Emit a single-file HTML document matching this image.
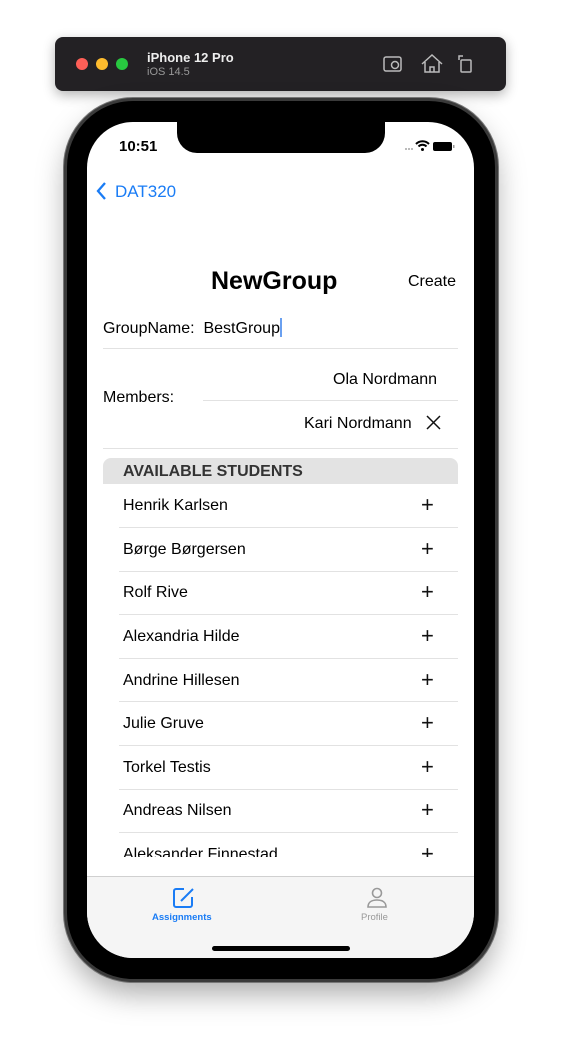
<!DOCTYPE html><html><head><style>
body{margin:0;width:561px;height:1055px;background:#fff;position:relative;overflow:hidden;font-family:"Liberation Sans",sans-serif}
.a{position:absolute}
.bar{left:55px;top:37px;width:451px;height:54px;background:#232124;border-radius:8px;box-shadow:0 4px 12px rgba(0,0,0,.3)}
.dot{width:12px;height:12px;border-radius:50%;top:58px}
.phone{left:67px;top:101px;width:428px;height:878px;border-radius:66px;background:#000;box-shadow:0 0 0 3px #3a3a3a,0 0 0 4px #777,0 14px 30px rgba(0,0,0,.35)}
.screen{left:87px;top:122px;width:387px;height:836px;border-radius:46px;background:#fff;overflow:hidden}
.t{font-size:16px;color:#000;white-space:nowrap}
.sep{height:1px;background:#e2e2e2}
.plus{font-size:22px;font-weight:300;color:#111}
</style></head><body>
<div class="a bar"></div>
<div class="a dot" style="left:76px;background:#fe5f57"></div>
<div class="a dot" style="left:96px;background:#febc2e"></div>
<div class="a dot" style="left:116px;background:#28c840"></div>
<div class="a" style="left:147px;top:50px;color:#eee;font-weight:bold;font-size:13px">iPhone 12 Pro</div>
<div class="a" style="left:147px;top:66px;color:#999;font-size:11px">iOS 14.5</div>
<svg class="a" style="left:380px;top:52px" width="100" height="24" fill="none" stroke="#bbb" stroke-width="1.5"><rect x="4" y="5" width="17" height="14" rx="2"/><circle cx="15" cy="13" r="3.5"/><path d="M42 12l10-9 10 9M45 10v10h14V10M50 20v-5h4v5"/><rect x="81" y="8" width="10" height="12" rx="1"/><path d="M83 4h-4v4"/></svg>
<div class="a phone"></div>
<div class="a screen">
<div class="a" style="left:90px;top:0;width:208px;height:31px;background:#000;border-radius:0 0 20px 20px"></div>
<div class="a" style="left:32px;top:16px;font-weight:bold;font-size:15px">10:51</div>
<svg class="a" style="left:318px;top:17px" width="60" height="14"><g fill="#bbb"><rect x="0" y="9" width="2" height="2"/><rect x="3" y="9" width="2" height="2"/><rect x="6" y="9" width="2" height="2"/></g><path d="M11 5a9 9 0 0 1 13 0M13.5 7.5a5.5 5.5 0 0 1 8 0" stroke="#000" stroke-width="2" fill="none"/><circle cx="17.5" cy="10.5" r="1.5"/><rect x="28" y="3" width="19" height="9" rx="2" fill="#000"/><rect x="48" y="6" width="1.5" height="3" fill="#999"/></svg>
<svg class="a" style="left:8px;top:59px" width="14" height="20" fill="none" stroke="#1a7cf5" stroke-width="2.3"><path d="M10 2L3 10l7 8"/></svg>
<div class="a t" style="left:28px;top:60px;color:#1a7cf5;font-size:17px">DAT320</div>
<div class="a t" style="left:124px;top:145px;font-size:25px;font-weight:bold">NewGroup</div>
<div class="a t" style="left:321px;top:151px">Create</div>
<div class="a t" style="left:16px;top:196px">GroupName:&nbsp; BestGroup<span style="display:inline-block;width:2px;height:19px;background:#6aa0f0;vertical-align:-4px"></span></div>
<div class="a sep" style="left:16px;top:226px;width:355px"></div>
<div class="a t" style="left:246px;top:249px">Ola Nordmann</div>
<div class="a t" style="left:16px;top:267px">Members:</div>
<div class="a sep" style="left:116px;top:278px;width:255px"></div>
<div class="a t" style="left:217px;top:293px">Kari Nordmann</div>
<svg class="a" style="left:339px;top:293px" width="15" height="15" stroke="#111" stroke-width="1.5"><path d="M1 1l13 13M14 1L1 14"/></svg>
<div class="a sep" style="left:16px;top:326px;width:355px"></div>
<div class="a" style="left:16px;top:336px;width:355px;height:26px;background:#e3e3e3;border-radius:8px 8px 0 0"></div>
<div class="a t" style="left:36px;top:341px;font-weight:bold;color:#333;font-size:16px">AVAILABLE STUDENTS</div>
<div class="a" style="left:0;top:362px;width:387px;height:373px;overflow:hidden">
<div class="a t" style="left:36px;top:13px">Henrik Karlsen</div><div class="a plus" style="left:334px;top:8px">+</div><div class="a sep" style="left:32px;top:43px;width:339px"></div>
<div class="a t" style="left:36px;top:57px">Børge Børgersen</div><div class="a plus" style="left:334px;top:52px">+</div><div class="a sep" style="left:32px;top:87px;width:339px"></div>
<div class="a t" style="left:36px;top:100px">Rolf Rive</div><div class="a plus" style="left:334px;top:95px">+</div><div class="a sep" style="left:32px;top:130px;width:339px"></div>
<div class="a t" style="left:36px;top:144px">Alexandria Hilde</div><div class="a plus" style="left:334px;top:139px">+</div><div class="a sep" style="left:32px;top:174px;width:339px"></div>
<div class="a t" style="left:36px;top:188px">Andrine Hillesen</div><div class="a plus" style="left:334px;top:183px">+</div><div class="a sep" style="left:32px;top:217px;width:339px"></div>
<div class="a t" style="left:36px;top:231px">Julie Gruve</div><div class="a plus" style="left:334px;top:226px">+</div><div class="a sep" style="left:32px;top:261px;width:339px"></div>
<div class="a t" style="left:36px;top:275px">Torkel Testis</div><div class="a plus" style="left:334px;top:270px">+</div><div class="a sep" style="left:32px;top:305px;width:339px"></div>
<div class="a t" style="left:36px;top:318px">Andreas Nilsen</div><div class="a plus" style="left:334px;top:313px">+</div><div class="a sep" style="left:32px;top:348px;width:339px"></div>
<div class="a t" style="left:36px;top:362px">Aleksander Finnestad</div><div class="a plus" style="left:334px;top:357px">+</div>
</div>
<div class="a" style="left:0;top:754px;width:387px;height:82px;background:#f5f5f5;border-top:1px solid #d0d0d0"></div>
<svg class="a" style="left:85px;top:764px" width="24" height="24" fill="none" stroke="#1a7cf5" stroke-width="2"><path d="M12 3H4a2 2 0 0 0-2 2v14a2 2 0 0 0 2 2h14a2 2 0 0 0 2-2v-8"/><path d="M9 15l12-12"/></svg>
<div class="a" style="left:65px;top:790px;font-size:9.5px;color:#1a7cf5;font-weight:bold">Assignments</div>
<svg class="a" style="left:278px;top:764px" width="24" height="24" fill="none" stroke="#999" stroke-width="1.6"><circle cx="12" cy="7" r="4.5"/><path d="M3 21c0-5 4-7 9-7s9 2 9 7z"/></svg>
<div class="a" style="left:274px;top:790px;font-size:9.5px;color:#999">Profile</div>
<div class="a" style="left:125px;top:824px;width:138px;height:5px;border-radius:3px;background:#000"></div>
</div>
</body></html>
